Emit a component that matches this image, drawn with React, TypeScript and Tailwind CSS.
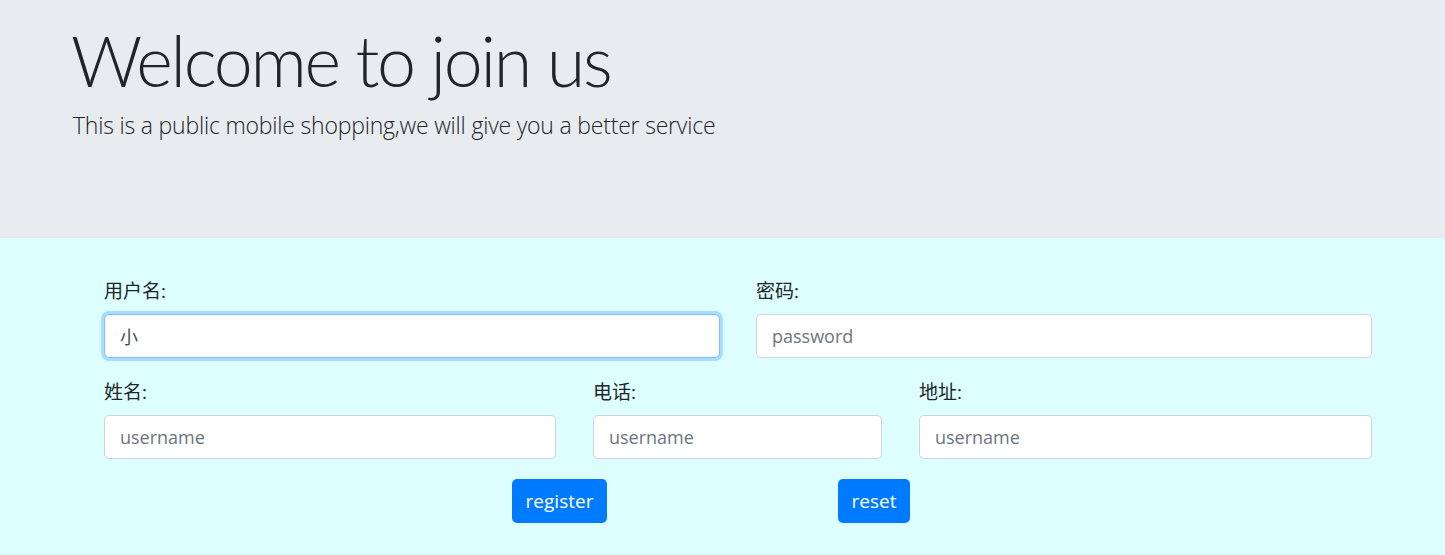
import React from "react";

const font = { fontFamily: '"Open Sans", "Noto Sans CJK SC", sans-serif' };

function Field({ label, placeholder, value, focused, width }: { label: string; placeholder?: string; value?: string; focused?: boolean; width: string }) {
  return (
    <div className={`flex flex-col ${width}`}>
      <label className="text-[19px] leading-[24px] text-[#212529] mb-[11px]">{label}</label>
      <input
        readOnly
        value={value}
        placeholder={placeholder}
        className={
          "h-[44px] w-full rounded-[5px] bg-white px-[15px] text-[18px] text-[#495057] placeholder:text-[#6c757d] outline-none border " +
          (focused ? "border-[#80bdff] shadow-[0_0_0_3px_rgba(0,123,255,0.25)]" : "border-[#ced4da]")
        }
        style={font}
      />
    </div>
  );
}

export default function App() {
  return (
    <div className="w-[1445px] h-[555px] bg-[#ddffff] overflow-hidden" style={font}>
      <div className="h-[238px] bg-[#e9ecef] pl-[71px] pt-[18px]">
        <h1 className="font-['Lato',sans-serif] text-[70px] leading-[84px] font-light text-[#212529] tracking-[-2.3px]">Welcome to join us</h1>
        <p className="text-[23px] leading-[34px] font-light text-[#212529] mt-[6px] pl-[2px] tracking-[-0.2px]">This is a public mobile shopping,we will give you a better service</p>
      </div>
      <div className="pl-[104px] pt-[41px]">
        <div className="flex gap-[36px]">
          <Field label="用户名:" value="小" focused width="w-[616px]" />
          <Field label="密码:" placeholder="password" width="w-[616px]" />
        </div>
        <div className="flex gap-[37px] mt-[22px]">
          <Field label="姓名:" placeholder="username" width="w-[452px]" />
          <Field label="电话:" placeholder="username" width="w-[289px]" />
          <Field label="地址:" placeholder="username" width="w-[453px]" />
        </div>
        <div className="flex mt-[20px]">
          <button className="ml-[408px] h-[44px] w-[95px] rounded-[5px] bg-[#007bff] text-white text-[19px]">register</button>
          <button className="ml-[231px] h-[44px] w-[72px] rounded-[5px] bg-[#007bff] text-white text-[19px]">reset</button>
        </div>
      </div>
    </div>
  );
}
